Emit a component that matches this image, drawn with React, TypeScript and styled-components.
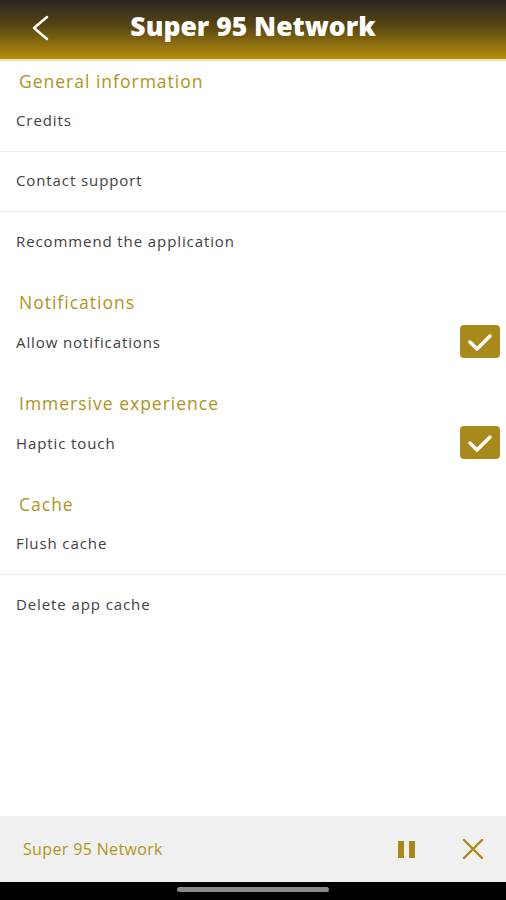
import React from "react";
import styled, { createGlobalStyle } from "styled-components";

const Global = createGlobalStyle`
  html, body { margin: 0; padding: 0; background: #ffffff; }
  body { font-family: "Open Sans", "Noto Sans", sans-serif; }
  * { box-sizing: border-box; }
`;

const Screen = styled.div`
  width: 506px;
  height: 900px;
  display: flex;
  flex-direction: column;
  background: #fff;
  overflow: hidden;
`;

const Header = styled.header`
  height: 61px;
  flex: none;
  display: grid;
  grid-template-columns: 60px 1fr 60px;
  align-items: center;
  background: linear-gradient(180deg, #2b2520 0%, #5a4712 45%, #b58f0c 100%);
  border-bottom: 2px solid #f3e3a8;
`;

const BackButton = styled.div`
  display: flex;
  align-items: center;
  justify-content: center;
  padding-left: 20px;
  padding-bottom: 4px;
`;

const Title = styled.h1`
  margin: 0;
  text-align: center;
  color: #fff;
  font-family: "Open Sans", sans-serif;
  font-weight: 800;
  font-size: 26.5px;
  padding-bottom: 7px;
`;

const Content = styled.main`
  flex: 1;
  display: flex;
  flex-direction: column;
`;

const SectionTitle = styled.div`
  height: 41px;
  display: flex;
  align-items: flex-end;
  padding: 0 0 1px 19px;
  color: #ad9420;
  font-size: 17.5px;
  line-height: 20px;
  letter-spacing: 1px;
  &:first-child {
    margin-top: -10px;
  }
`;

const Row = styled.div<{ $divider?: boolean }>`
  height: 60px;
  flex: none;
  display: flex;
  align-items: center;
  justify-content: space-between;
  padding: 0 6px 3px 16px;
  color: #404040;
  font-size: 15px;
  letter-spacing: 0.9px;
  border-bottom: ${(p) => (p.$divider ? "1px solid #ececec" : "none")};
`;

const Check = styled.div`
  width: 40px;
  height: 33px;
  border-radius: 4px;
  background: #a88a1b;
  display: flex;
  align-items: center;
  justify-content: center;
`;

const Player = styled.footer`
  height: 66px;
  flex: none;
  background: #f0f0f0;
  display: flex;
  align-items: center;
  padding: 0 22px 0 23px;
`;

const PlayerTitle = styled.span`
  flex: 1;
  color: #b39622;
  font-size: 16px;
  letter-spacing: 0.35px;
`;

const IconBtn = styled.div<{ $mr?: number }>`
  display: flex;
  align-items: center;
  justify-content: center;
  margin-right: ${(p) => p.$mr ?? 0}px;
`;

const NavBar = styled.div`
  height: 18px;
  flex: none;
  background: #000;
  display: flex;
  justify-content: center;
  padding-top: 5px;
`;

const Handle = styled.div`
  width: 152px;
  height: 5px;
  border-radius: 3px;
  background: #8a8a8a;
`;

const CheckMark = () => (
  <Check>
    <svg width="28" height="22" viewBox="0 0 28 22">
      <path d="M4 11 L11 18 L24 5" fill="none" stroke="#fff" strokeWidth="3.5" strokeLinecap="round" strokeLinejoin="round" />
    </svg>
  </Check>
);

export default function App() {
  return (
    <>
      <Global />
      <Screen>
        <Header>
          <BackButton>
            <svg width="20" height="26" viewBox="0 0 20 26">
              <path d="M17 2 L4 13 L17 24" fill="none" stroke="#fff" strokeWidth="2.5" strokeLinecap="round" strokeLinejoin="round" />
            </svg>
          </BackButton>
          <Title>Super 95 Network</Title>
          <div />
        </Header>
        <Content>
          <SectionTitle>General information</SectionTitle>
          <Row $divider>Credits</Row>
          <Row $divider>Contact support</Row>
          <Row>Recommend the application</Row>
          <SectionTitle>Notifications</SectionTitle>
          <Row>
            Allow notifications
            <CheckMark />
          </Row>
          <SectionTitle>Immersive experience</SectionTitle>
          <Row>
            Haptic touch
            <CheckMark />
          </Row>
          <SectionTitle>Cache</SectionTitle>
          <Row $divider>Flush cache</Row>
          <Row>Delete app cache</Row>
        </Content>
        <Player>
          <PlayerTitle>Super 95 Network</PlayerTitle>
          <IconBtn $mr={46}>
            <svg width="18" height="17" viewBox="0 0 18 17">
              <rect x="0" y="0" width="6" height="17" fill="#a88a12" />
              <rect x="11" y="0" width="6" height="17" fill="#a88a12" />
            </svg>
          </IconBtn>
          <IconBtn>
            <svg width="22" height="20" viewBox="0 0 22 20">
              <path d="M2 1 L20 19 M20 1 L2 19" stroke="#a88a12" strokeWidth="2.4" strokeLinecap="round" />
            </svg>
          </IconBtn>
        </Player>
        <NavBar>
          <Handle />
        </NavBar>
      </Screen>
    </>
  );
}
